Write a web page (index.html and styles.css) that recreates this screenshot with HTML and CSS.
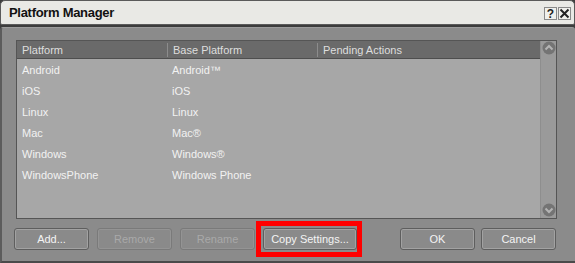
FILE: index.html
```html
<!DOCTYPE html>
<html lang="en">
<head>
    <meta charset="UTF-8">
    <title>Platform Manager</title>
    <link rel="stylesheet" href="styles.css">
</head>
<body>
    <div class="ventana">
        <div class="titulo">
            <span class="titulo-texto">Platform Manager</span>
            <div class="titulo-botones">
                <span class="boton-titulo">?</span>
                <span class="boton-titulo cerrar">
                    <svg width="11" height="11" viewBox="0 0 11 11"><path d="M1.5 1.5 L9.5 9.5 M9.5 1.5 L1.5 9.5" stroke="#222" stroke-width="2"/></svg>
                </span>
            </div>
        </div>
        <div class="contenido">
            <div class="lista">
                <div class="tabla">
                    <div class="fila cabecera">
                        <div class="celda">Platform</div>
                        <div class="celda">Base Platform</div>
                        <div class="celda">Pending Actions</div>
                    </div>
                    <div id="filas"></div>
                </div>
                <div class="scroll">
                    <span class="flecha">
                        <svg width="14" height="14" viewBox="0 0 14 14"><circle cx="7" cy="7" r="6.5" fill="#747474"/><path d="M3.5 8.5 L7 5 L10.5 8.5" stroke="#b4b4b4" stroke-width="2" fill="none"/></svg>
                    </span>
                    <span class="flecha">
                        <svg width="14" height="14" viewBox="0 0 14 14"><circle cx="7" cy="7" r="6.5" fill="#747474"/><path d="M3.5 5.5 L7 9 L10.5 5.5" stroke="#b4b4b4" stroke-width="2" fill="none"/></svg>
                    </span>
                </div>
            </div>
            <div class="botones">
                <button class="boton">Add...</button>
                <button class="boton" disabled>Remove</button>
                <button class="boton" disabled>Rename</button>
                <span class="resaltado"><button class="boton ancho">Copy Settings...</button></span>
                <span class="espacio"></span>
                <button class="boton">OK</button>
                <button class="boton ultimo">Cancel</button>
            </div>
        </div>
    </div>
    <script>
        const plataformas = [
            ['Android', 'Android\u2122'],
            ['iOS', 'iOS'],
            ['Linux', 'Linux'],
            ['Mac', 'Mac\u00ae'],
            ['Windows', 'Windows\u00ae'],
            ['WindowsPhone', 'Windows Phone']
        ];

        const filas = document.getElementById('filas');
        plataformas.forEach(p => {
            const fila = document.createElement('div');
            fila.classList.add('fila');
            [p[0], p[1], ''].forEach(texto => {
                const celda = document.createElement('div');
                celda.classList.add('celda');
                celda.textContent = texto;
                fila.appendChild(celda);
            });
            filas.appendChild(fila);
        });
    </script>
</body>
</html>
```

FILE: styles.css
```css
body {
    margin: 0;
    padding: 0;
    font-family: "Liberation Sans", Arial, sans-serif;
    font-size: 11px;
    background-color: #3c3c3c;
}

.ventana {
    width: 575px;
    height: 263px;
    box-sizing: border-box;
    display: flex;
    flex-direction: column;
    background-color: #3c3c3c;
}

.titulo {
    height: 25px;
    box-sizing: border-box;
    display: flex;
    align-items: center;
    justify-content: space-between;
    padding: 0 3px 0 8px;
    background-color: #e9e9e5;
    border: 1px solid #5a5a5a;
    border-radius: 5px 5px 2px 2px;
    margin-bottom: 2px;
}

.titulo-texto {
    font-weight: bold;
    font-size: 13px;
    color: #111;
    letter-spacing: -0.3px;
}

.titulo-botones {
    display: flex;
    gap: 1px;
    margin-top: 2px;
}

.boton-titulo {
    width: 13px;
    height: 13px;
    box-sizing: border-box;
    border: 1px solid #8a8a8a;
    background-color: #f0f0ec;
    display: flex;
    align-items: center;
    justify-content: center;
    font-weight: bold;
    font-size: 12px;
    color: #222;
}

.contenido {
    flex: 1;
    background-color: #8b8b8b;
    border-left: 2px solid #5c5c5c;
    border-bottom: 2px solid #4a4a4a;
    border-top: 1px solid #9c9c9c;
    border-radius: 3px 3px 0 0;
    padding: 12px 18px 0 14px;
    display: flex;
    flex-direction: column;
}

.lista {
    height: 179px;
    box-sizing: border-box;
    border: 1px solid #555;
    background-color: #a7a7a7;
    display: flex;
}

.tabla {
    flex: 1;
}

.fila {
    display: grid;
    grid-template-columns: 150px 150px 1fr;
    height: 21px;
    align-items: center;
    color: #f2f2f2;
}

.celda {
    padding-left: 5px;
    white-space: nowrap;
}

.cabecera {
    height: 17px;
    background-color: #6a6a6a;
    border-bottom: 1px solid #4e4e4e;
    color: #dedede;
}

.cabecera .celda + .celda {
    border-left: 1px solid #8c8c8c;
    height: 14px;
    line-height: 14px;
}

.scroll {
    width: 15px;
    background-color: #9a9a9a;
    border-left: 1px solid #8e8e8e;
    display: flex;
    flex-direction: column;
    justify-content: space-between;
    align-items: center;
    padding: 0 0 1px 0;
}

.flecha {
    display: flex;
}

.botones {
    display: flex;
    align-items: center;
    gap: 8px;
    margin: 9px 1px 0 -2px;
}

.boton {
    width: 75px;
    height: 22px;
    box-sizing: border-box;
    font-family: "Liberation Sans", Arial, sans-serif;
    font-size: 11px;
    color: #f4f4f4;
    background-color: #8a8a8a;
    border: 1px solid #5e5e5e;
    border-radius: 3px;
    box-shadow: inset 0 0 0 1px #a2a2a2;
    padding: 0;
}

.boton:disabled {
    color: #a9a9a9;
    box-shadow: inset 0 0 0 1px #949494;
    border-color: #7a7a7a;
}

.boton.ancho {
    width: 94px;
}

.boton.ultimo {
    margin-left: -2px;
}

.resaltado {
    display: flex;
    border: 5px solid #ff0000;
    padding: 2px 0 2px 2px;
    margin: -7px -5px -7px -7px;
}

.espacio {
    flex: 1;
}
```
